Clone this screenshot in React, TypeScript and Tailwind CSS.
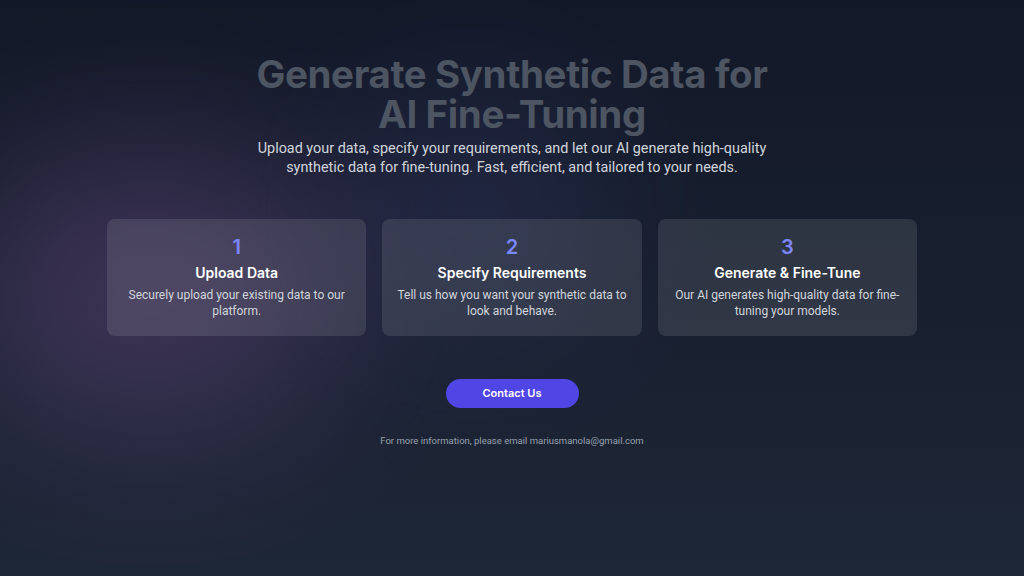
import React from "react";

const steps = [
  {
    n: "1",
    title: "Upload Data",
    text: "Securely upload your existing data to our platform.",
  },
  {
    n: "2",
    title: "Specify Requirements",
    text: "Tell us how you want your synthetic data to look and behave.",
  },
  {
    n: "3",
    title: "Generate & Fine-Tune",
    text: "Our AI generates high-quality data for fine-tuning your models.",
  },
];

export default function App() {
  return (
    <div className="relative min-h-screen w-full overflow-hidden bg-gradient-to-b from-[#121827] to-[#1e2737] font-['Roboto',sans-serif]">
      {/* blurred purple glows */}
      <div className="pointer-events-none absolute left-[-40px] top-[150px] h-[280px] w-[380px] rounded-full bg-[#74528f] opacity-40 blur-[80px]" />
      <div className="pointer-events-none absolute left-[340px] top-[90px] h-[240px] w-[260px] rounded-full bg-[#4a4a8a] opacity-25 blur-[80px]" />

      <div className="relative flex flex-col items-center pt-[54px]">
        <h1 className="text-center font-['Inter',sans-serif] text-[38.5px] font-bold leading-[40px] tracking-[-0.01em] text-[#4d5462]">
          Generate Synthetic Data for
          <br />
          AI Fine-Tuning
        </h1>
        <p className="mt-[5px] w-[520px] text-center text-[14.4px] leading-[19px] text-gray-300">
          Upload your data, specify your requirements, and let our AI generate high-quality synthetic data for fine-tuning. Fast, efficient, and tailored to your needs.
        </p>

        <div className="mt-[42px] grid w-[810px] grid-cols-3 gap-4">
          {steps.map((s) => (
            <div
              key={s.n}
              className="flex h-[117px] flex-col items-center rounded-lg bg-white/10 px-3 pt-[17px] text-center"
            >
              <div className="font-['Inter',sans-serif] text-[20px] font-semibold leading-[22px] text-indigo-400">{s.n}</div>
              <div className="mt-[5px] font-['Inter',sans-serif] text-[14px] font-semibold leading-[20px] text-white">{s.title}</div>
              <div className="mt-[4px] text-[12px] leading-[16px] text-gray-300">{s.text}</div>
            </div>
          ))}
        </div>

        <button className="mt-[43px] h-[29px] w-[133px] rounded-full bg-[#4f46e5] font-['Inter',sans-serif] text-[11px] font-semibold text-white">
          Contact Us
        </button>

        <p className="mt-[26px] text-[9.5px] text-gray-400">
          For more information, please email mariusmanola@gmail.com
        </p>
      </div>
    </div>
  );
}
